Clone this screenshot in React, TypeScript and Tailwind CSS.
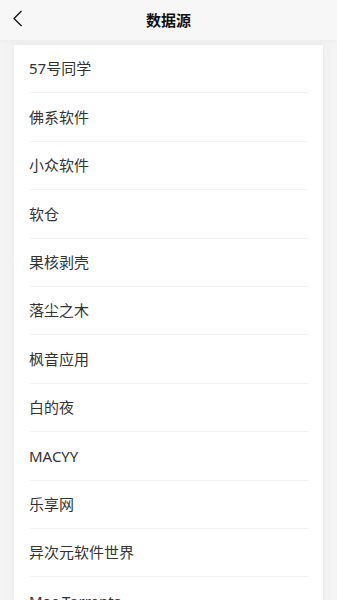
import React from "react";

const items = [
  "57号同学",
  "佛系软件",
  "小众软件",
  "软仓",
  "果核剥壳",
  "落尘之木",
  "枫音应用",
  "白的夜",
  "MACYY",
  "乐享网",
  "异次元软件世界",
  "Mac Torrents",
  "腾讯软件",
  "吾爱破解",
];

export default function App() {
  return (
    <div
      className="min-h-screen w-full bg-[#f4f4f4]"
      style={{ fontFamily: '"Noto Sans", "Noto Sans CJK SC", sans-serif' }}
    >
      <div className="relative flex h-10 items-center justify-center bg-[#f7f7f7] shadow-[0_2px_6px_rgba(0,0,0,0.03)]">
        <svg
          className="absolute left-[12px] top-[10px]"
          width="11"
          height="17"
          viewBox="0 0 11 17"
          fill="none"
        >
          <path d="M9.5 1 L2 8.5 L9.5 16" stroke="#111" strokeWidth="1.3" />
        </svg>
        <span className="text-[15px] font-bold text-[#111]">数据源</span>
      </div>
      <div className="mx-[14px] mt-[5px] bg-white shadow-[0_0_10px_rgba(0,0,0,0.06)]">
        {items.map((t) => (
          <div key={t} className="px-[15px]">
            <div className="flex h-[48.4px] items-center border-b border-[#f2f2f2] text-[15px] text-[#333]">
              {t}
            </div>
          </div>
        ))}
      </div>
    </div>
  );
}
